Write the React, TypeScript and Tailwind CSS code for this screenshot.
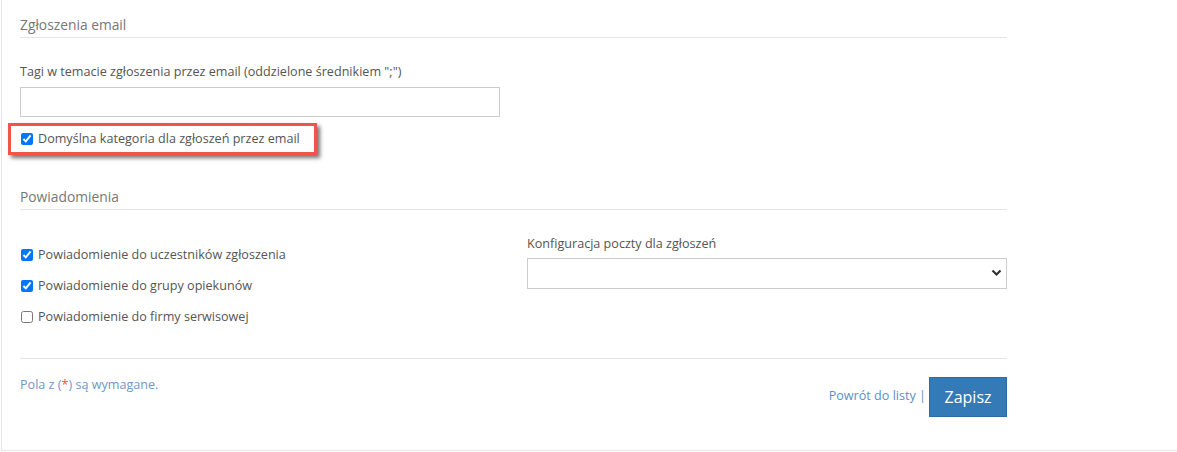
import React from "react";

const font = { fontFamily: '"Open Sans", "Noto Sans", sans-serif' };

function Check({ checked, label }: { checked: boolean; label: string }) {
  return (
    <label className="flex items-center h-[18px] text-[12.6px] text-[#555]">
      <input
        type="checkbox"
        defaultChecked={checked}
        className="m-0 ml-px mr-[5px] w-[12px] h-[12px] accent-[#0075ff]"
      />
      <span>{label}</span>
    </label>
  );
}

export default function App() {
  return (
    <div className="w-[1177px] h-[452px] bg-white" style={font}>
      <div className="ml-px w-[1176px] h-[451px] border-l border-b border-[#e6e6e6] pl-[18px]">
        <div className="w-[987px]">
          {/* Section 1 */}
          <div className="pt-[15px] pb-[2px] border-b border-[#e5e5e5] text-[13.8px] leading-[20px] text-[#777]">
            Zgłoszenia email
          </div>
          <div className="mt-[25px] text-[12.6px] leading-[18px] text-[#555]">
            Tagi w temacie zgłoszenia przez email (oddzielone średnikiem ";")
          </div>
          <input
            type="text"
            className="mt-[6px] block w-[480px] h-[30px] border border-[#cccccc] bg-white outline-none"
          />
          <div className="mt-[6px] -ml-[12px] inline-flex items-center w-[309px] h-[32px] border-[3px] border-[#f2544b] pl-[9px] shadow-[3px_3px_4px_rgba(0,0,0,0.55)]">
            <Check checked label="Domyślna kategoria dla zgłoszeń przez email" />
          </div>

          {/* Section 2 */}
          <div className="mt-[32px] pb-[2px] border-b border-[#e5e5e5] text-[13.8px] leading-[20px] text-[#777]">
            Powiadomienia
          </div>
          <div className="flex mt-[25px]">
            <div className="w-[507px] pt-[11px] flex flex-col gap-[13px]">
              <Check checked label="Powiadomienie do uczestników zgłoszenia" />
              <Check checked label="Powiadomienie do grupy opiekunów" />
              <Check checked={false} label="Powiadomienie do firmy serwisowej" />
            </div>
            <div className="w-[480px]">
              <div className="text-[12.6px] leading-[18px] text-[#555]">
                Konfiguracja poczty dla zgłoszeń
              </div>
              <div className="relative mt-[5px] h-[31px] border border-[#cccccc] bg-white">
                <svg
                  className="absolute right-[4px] top-[10px]"
                  width="11"
                  height="8"
                  viewBox="0 0 11 8"
                >
                  <path d="M1.5 1.5 L5.5 5.5 L9.5 1.5" stroke="#333" strokeWidth="2.2" fill="none" />
                </svg>
              </div>
            </div>
          </div>

          {/* Footer */}
          <div className="mt-[32px] border-t border-[#e5e5e5] flex justify-between">
            <div className="mt-[17px] text-[12.6px] leading-[18px] text-[#7097c9]">
              Pola z (<span className="text-[#f0503c]">*</span>) są wymagane.
            </div>
            <div className="mt-[18px] flex items-center">
              <span className="mt-[-1px] text-[12.6px] text-[#5b90c8]">Powrót do listy |</span>
              <button className="ml-[3px] w-[78px] h-[40px] bg-[#337ab7] border border-[#2e6da4] text-white text-[16px]">
                Zapisz
              </button>
            </div>
          </div>
        </div>
      </div>
    </div>
  );
}
